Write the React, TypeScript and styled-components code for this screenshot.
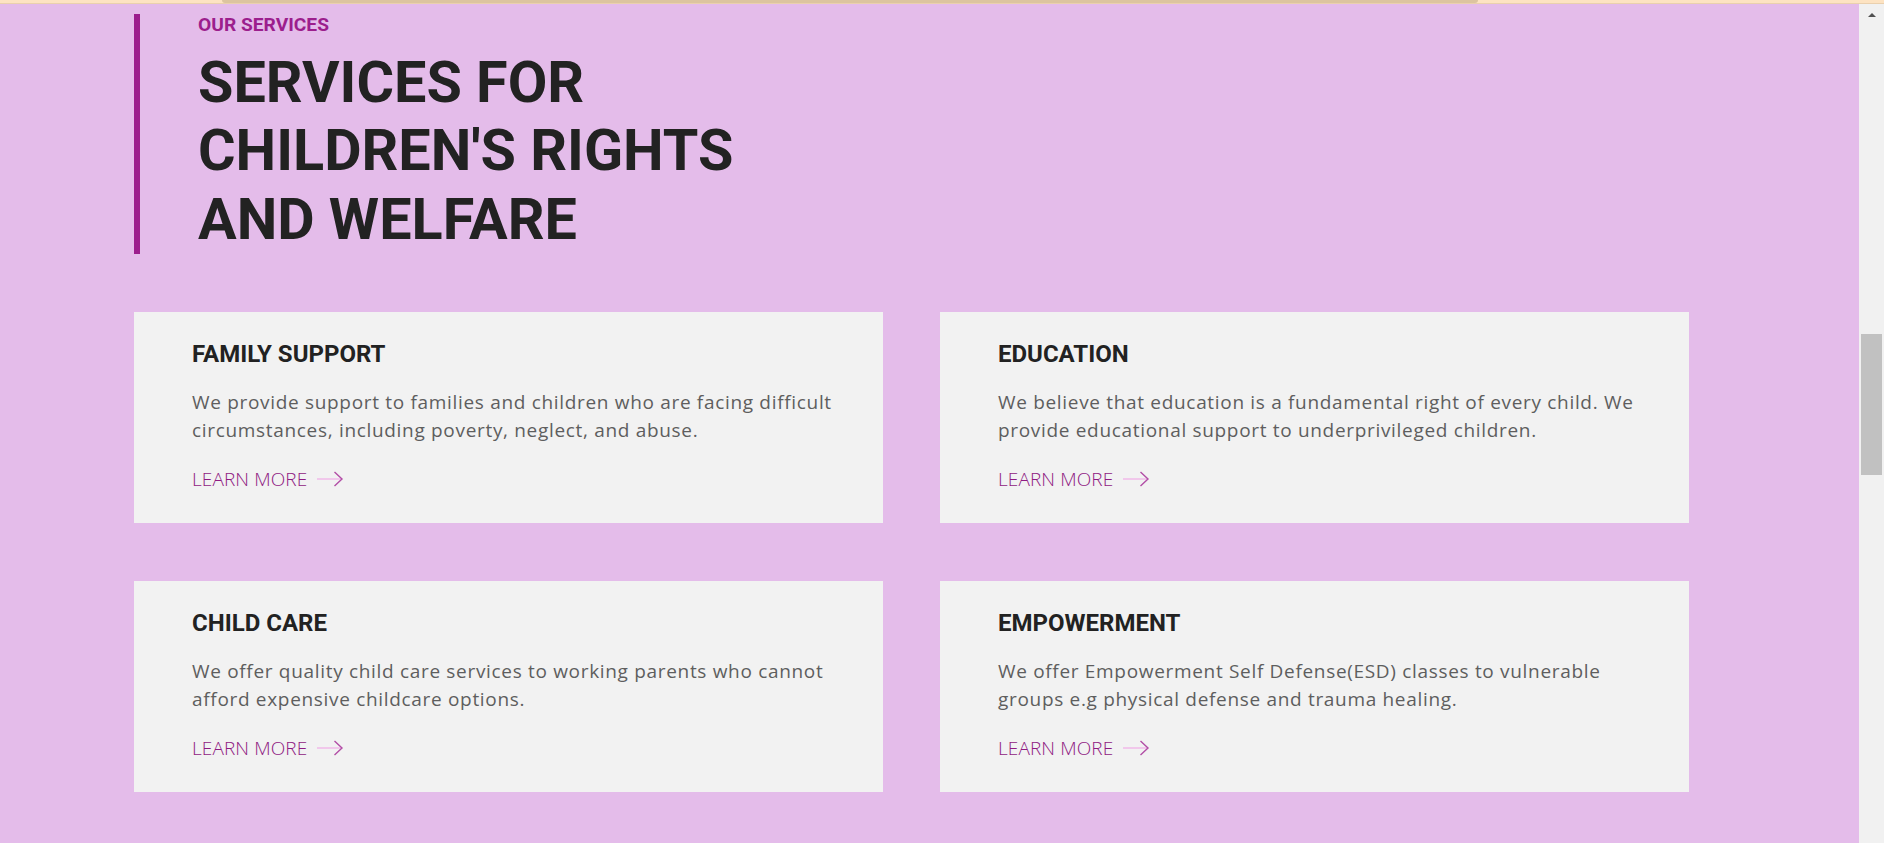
import React from "react";
import styled, { createGlobalStyle } from "styled-components";

const Global = createGlobalStyle`
  html, body { margin: 0; padding: 0; height: 843px; overflow: hidden; background: #e4bcea; }
  * { box-sizing: border-box; }
`;

const Page = styled.div`
  display: flex;
  flex-direction: column;
  width: 1884px;
  height: 843px;
`;

const TopStrip = styled.div`
  height: 4px;
  background: #fde3c2;
  border-bottom: 1px solid #ead0ae;
  display: flex;
  padding-left: 222px;
`;

const Tab = styled.div`
  width: 1256px;
  height: 3px;
  background: #dcc49f;
  border-radius: 0 0 14px 14px;
`;

const Body = styled.div`
  flex: 1;
  display: flex;
  min-height: 0;
`;

const Main = styled.main`
  flex: 1;
  padding: 10px 0 0 134px;
  font-family: Roboto, "Liberation Sans", sans-serif;
`;

const Header = styled.header`
  border-left: 6px solid #9c1e8d;
  padding-left: 58px;
`;

const Eyebrow = styled.div`
  font-size: 19.2px;
  line-height: 22px;
  font-weight: 700;
  color: #9c1e8d;
  text-transform: uppercase;
`;

const Title = styled.h2`
  margin: 12.5px 0 0;
  font-size: 57.5px;
  line-height: 68.5px;
  font-weight: 700;
  color: #222222;
`;

const Grid = styled.div`
  display: grid;
  grid-template-columns: 749px 749px;
  column-gap: 57px;
  row-gap: 58px;
  margin-top: 58px;
`;

const Card = styled.article`
  background: #f2f2f2;
  height: 211px;
  padding: 28px 30px 0 58px;
`;

const CardTitle = styled.h3`
  margin: 0;
  font-size: 24px;
  line-height: 28.8px;
  font-weight: 700;
  color: #222222;
`;

const CardText = styled.p`
  margin: 19px 0 0;
  font-family: "Open Sans", sans-serif;
  font-size: 19px;
  line-height: 28.4px;
  letter-spacing: 0.68px;
  color: #5e5e5e;
  white-space: nowrap;
`;

const LearnMore = styled.a`
  display: flex;
  align-items: center;
  gap: 10px;
  margin-top: 20px;
  font-family: "Open Sans", sans-serif;
  font-size: 19px;
  line-height: 28.8px;
  font-weight: 300;
  letter-spacing: 0.1px;
  color: #8f1a82;
  text-decoration: none;
  text-transform: uppercase;
`;

const ScrollTrack = styled.div`
  width: 25px;
  background: #f1f1f1;
  display: flex;
  flex-direction: column;
  align-items: center;
  padding-top: 9px;
`;

const ScrollArrow = styled.div`
  width: 0;
  height: 0;
  border-left: 4px solid transparent;
  border-right: 4px solid transparent;
  border-bottom: 4px solid #505050;
`;

const Thumb = styled.div`
  width: 21px;
  height: 141px;
  margin-top: 317px;
  background: #c1c1c1;
`;

const Arrow = () => (
  <svg width="27" height="16" viewBox="0 0 27 16" fill="none">
    <line x1="0" y1="8" x2="25" y2="8" stroke="#f0bde9" strokeWidth="1.6" />
    <polyline points="17.5,1 25,8 17.5,15" stroke="#b24ea6" strokeWidth="1.4" fill="none" />
  </svg>
);

const services = [
  {
    title: "FAMILY SUPPORT",
    lines: [
      "We provide support to families and children who are facing difficult",
      "circumstances, including poverty, neglect, and abuse.",
    ],
  },
  {
    title: "EDUCATION",
    lines: [
      "We believe that education is a fundamental right of every child. We",
      "provide educational support to underprivileged children.",
    ],
  },
  {
    title: "CHILD CARE",
    lines: [
      "We offer quality child care services to working parents who cannot",
      "afford expensive childcare options.",
    ],
  },
  {
    title: "EMPOWERMENT",
    lines: [
      "We offer Empowerment Self Defense(ESD) classes to vulnerable",
      "groups e.g physical defense and trauma healing.",
    ],
  },
];

export default function App() {
  return (
    <Page>
      <Global />
      <TopStrip>
        <Tab />
      </TopStrip>
      <Body>
        <Main>
          <Header>
            <Eyebrow>Our Services</Eyebrow>
            <Title>
              SERVICES FOR
              <br />
              CHILDREN'S RIGHTS
              <br />
              AND WELFARE
            </Title>
          </Header>
          <Grid>
            {services.map((s) => (
              <Card key={s.title}>
                <CardTitle>{s.title}</CardTitle>
                <CardText>
                  {s.lines[0]}
                  <br />
                  {s.lines[1]}
                </CardText>
                <LearnMore href="#">
                  Learn More
                  <Arrow />
                </LearnMore>
              </Card>
            ))}
          </Grid>
        </Main>
        <ScrollTrack>
          <ScrollArrow />
          <Thumb />
        </ScrollTrack>
      </Body>
    </Page>
  );
}
